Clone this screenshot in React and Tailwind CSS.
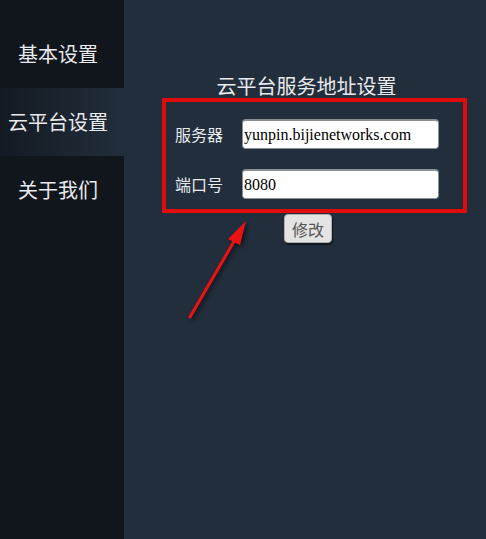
const menu = ["基本设置", "云平台设置", "关于我们"];

function Arrow() {
  return (
    <svg
      className="absolute left-0 top-0 pointer-events-none"
      width="486"
      height="539"
      style={{ filter: "drop-shadow(2px 2px 2px rgba(0,0,0,0.6))" }}
    >
      <line x1="190" y1="317" x2="236" y2="238" stroke="#ee1111" strokeWidth="3" strokeLinecap="round" />
      <polygon points="246,221 228,239 240,245" fill="#ee1111" />
    </svg>
  );
}

function Field({ label, value }) {
  return (
    <div className="flex items-center">
      <span className="w-[67px] text-[16px] text-[#e8eaed]">{label}</span>
      <input
        className="w-[197px] h-[30px] bg-white rounded-[4px] border border-t-2 border-[#8a8f96] pl-[1px] font-['Liberation_Serif',serif] text-[16px] text-black outline-none"
        defaultValue={value}
      />
    </div>
  );
}

export default function App() {
  const active = 1;
  return (
    <div className="relative flex w-[486px] h-[539px] overflow-hidden bg-[#222e3c] font-['Noto_Sans_CJK_SC','Liberation_Sans',sans-serif]">
      <aside className="w-[124px] shrink-0 bg-[#11161d] pt-[20px]">
        {menu.map((item, i) => (
          <div
            key={item}
            className={`h-[68px] flex items-center justify-center pr-[8px] text-[20px] text-[#e8eaed] ${
              i === active ? "bg-gradient-to-r from-[#141a22] to-[#222e3c]" : ""
            }`}
          >
            {item}
          </div>
        ))}
      </aside>

      <main className="flex-1 flex flex-col pt-[74px]">
        <h2 className="text-[20px] leading-[24px] text-[#e8eaed] text-center pl-[3px]">云平台服务地址设置</h2>

        <div className="ml-[38px] w-[305px] border-4 border-[#e00c0c] pt-[17px] pb-[10px] pl-[9px] flex flex-col gap-[20px]">
          <Field label="服务器" value="yunpin.bijienetworks.com" />
          <Field label="端口号" value="8080" />
        </div>

        <div className="flex justify-center pl-[6px] mt-[1px]">
          <button className="w-[48px] h-[29px] bg-[#e4e4e4] rounded-[4px] border border-[#b0b0b0] text-[16px] text-[#555] shadow-[1px_2px_1px_rgba(0,0,0,0.5)]">
            修改
          </button>
        </div>
      </main>

      <Arrow />
    </div>
  );
}
